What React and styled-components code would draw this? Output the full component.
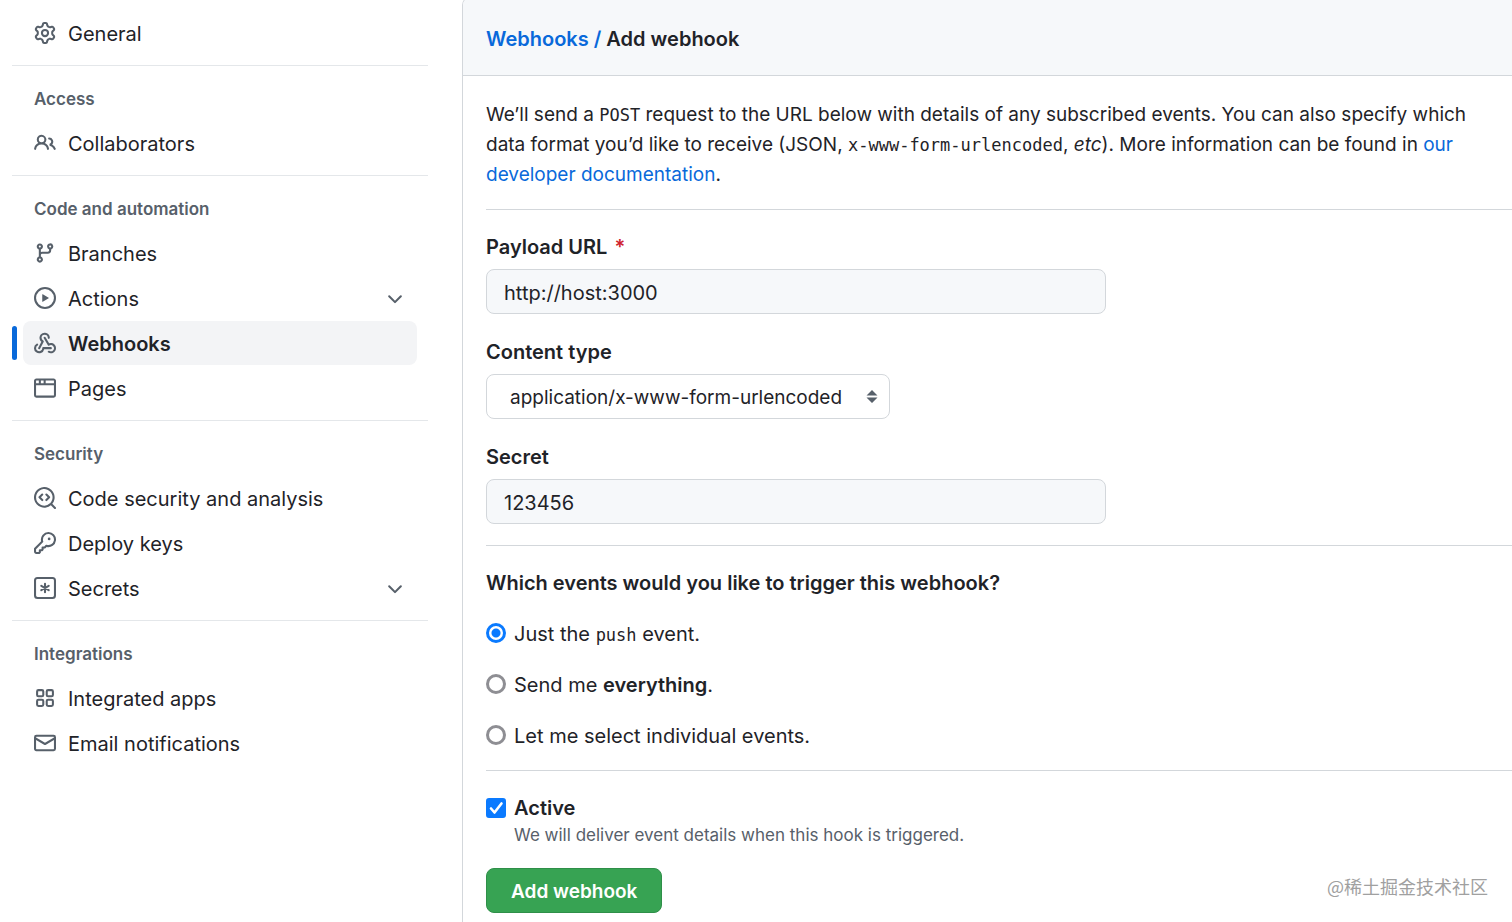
import React from 'react';
import styled, { createGlobalStyle, css, ThemeProvider } from 'styled-components';

const theme = {
  colors: {
    text: '#1f2328',
    muted: '#57606a',
    link: '#0969da',
    border: '#d3d7db',
    divider: '#e4e7ea',
    subtle: '#f6f8fa',
    hover: '#f3f4f6',
    control: '#0a7aff',
    danger: '#cf222e',
    success: '#37a353',
  },
  fonts: {
    body: 'Inter, "Noto Sans", "Noto Sans CJK SC", sans-serif',
    mono: '"DejaVu Sans Mono", "Liberation Mono", monospace',
  },
};

const GlobalStyle = createGlobalStyle`
  * {
    box-sizing: border-box;
  }

  body {
    margin: 0;
    background: #fff;
    color: ${theme.colors.text};
    font-family: ${theme.fonts.body};
    font-size: 20px;
    line-height: 30px;
  }
`;

// icons
const Svg = styled.svg`
  width: 22px;
  height: 22px;
  flex: none;
  fill: ${({ theme }) => theme.colors.muted};
`;

const Icon = ({ d, children }) => (
  <Svg viewBox="0 0 16 16" aria-hidden="true">
    {d && <path fillRule="evenodd" d={d} />}
    {children}
  </Svg>
);

const paths = {
  gear: 'M7.429 1.525a6.593 6.593 0 011.142 0c.036.003.108.036.137.146l.289 1.105c.147.56.55.967.997 1.189.174.086.341.183.501.29.417.278.97.423 1.53.27l1.102-.303c.11-.03.175.016.195.046.219.31.41.641.573.989.014.031.022.11-.059.19l-.815.806c-.411.406-.562.957-.53 1.456a4.588 4.588 0 010 .582c-.032.499.119 1.05.53 1.456l.815.806c.08.08.073.159.059.19a6.494 6.494 0 01-.573.99c-.02.029-.086.074-.195.045l-1.103-.303c-.559-.153-1.112-.008-1.529.27-.16.107-.327.204-.5.29-.449.222-.851.628-.998 1.189l-.289 1.105c-.029.11-.101.143-.137.146a6.613 6.613 0 01-1.142 0c-.036-.003-.108-.037-.137-.146l-.289-1.105c-.147-.56-.55-.967-.997-1.189a4.502 4.502 0 01-.501-.29c-.417-.278-.97-.423-1.53-.27l-1.102.303c-.11.03-.175-.016-.195-.046a6.492 6.492 0 01-.573-.989c-.014-.031-.022-.11.059-.19l.815-.806c.411-.406.562-.957.53-1.456a4.587 4.587 0 010-.582c.032-.499-.119-1.05-.53-1.456l-.815-.806c-.08-.08-.073-.159-.059-.19a6.44 6.44 0 01.573-.99c.02-.029.086-.075.195-.045l1.103.303c.559.153 1.112.008 1.529-.27.16-.107.327-.204.5-.29.449-.222.851-.628.998-1.189l.289-1.105c.029-.11.101-.143.137-.146zM8 0c-.236 0-.47.01-.701.03-.743.065-1.29.615-1.458 1.261l-.29 1.106c-.017.066-.078.158-.211.224a5.994 5.994 0 00-.668.386c-.123.082-.233.09-.3.071L3.27 2.776c-.644-.177-1.392.02-1.82.63a7.977 7.977 0 00-.704 1.217c-.315.675-.111 1.422.363 1.891l.815.806c.05.048.098.147.088.294a6.084 6.084 0 000 .772c.01.147-.038.246-.088.294l-.815.806c-.474.469-.678 1.216-.363 1.891.2.428.436.835.704 1.218.428.609 1.176.806 1.82.63l1.103-.303c.066-.019.176-.011.299.071.213.143.436.272.668.386.133.066.194.158.212.224l.289 1.106c.169.646.715 1.196 1.458 1.26a8.094 8.094 0 001.402 0c.743-.064 1.29-.614 1.458-1.26l.29-1.106c.017-.066.078-.158.211-.224a5.98 5.98 0 00.668-.386c.123-.082.233-.09.3-.071l1.102.302c.644.177 1.392-.02 1.82-.63.268-.382.505-.789.704-1.217.315-.675.111-1.422-.364-1.891l-.814-.806c-.05-.048-.098-.147-.088-.294a6.1 6.1 0 000-.772c-.01-.147.039-.246.088-.294l.814-.806c.475-.469.679-1.216.364-1.891a7.992 7.992 0 00-.704-1.218c-.428-.609-1.176-.806-1.82-.63l-1.103.303c-.066.019-.176.011-.299-.071a5.991 5.991 0 00-.668-.386c-.133-.066-.194-.158-.212-.224L10.16 1.29C9.99.645 9.444.095 8.701.031A8.094 8.094 0 008 0zm1.5 8a1.5 1.5 0 11-3 0 1.5 1.5 0 013 0zM11 8a3 3 0 11-6 0 3 3 0 016 0z',
  people: 'M5.5 3.5a2 2 0 100 4 2 2 0 000-4zM2 5.5a3.5 3.5 0 115.898 2.549 5.507 5.507 0 013.034 4.084.75.75 0 11-1.482.235 4.001 4.001 0 00-7.9 0 .75.75 0 01-1.482-.236A5.507 5.507 0 013.102 8.05 3.49 3.49 0 012 5.5zM11 4a.75.75 0 100 1.5 1.5 1.5 0 01.666 2.844.75.75 0 00-.416.672v.352a.75.75 0 00.574.73c1.2.289 2.162 1.2 2.522 2.372a.75.75 0 101.434-.44 5.01 5.01 0 00-2.56-3.012A3 3 0 0011 4z',
  branch: 'M11.75 2.5a.75.75 0 100 1.5.75.75 0 000-1.5zm-2.25.75a2.25 2.25 0 113 2.122V6A2.5 2.5 0 0110 8.5H6a1 1 0 00-1 1v1.128a2.251 2.251 0 11-1.5 0V5.372a2.25 2.25 0 111.5 0v1.836A2.492 2.492 0 016 7h4a1 1 0 001-1v-.628A2.25 2.25 0 019.5 3.25zM4.25 12a.75.75 0 100 1.5.75.75 0 000-1.5zM3.5 3.25a.75.75 0 111.5 0 .75.75 0 01-1.5 0z',
  play: 'M1.5 8a6.5 6.5 0 1113 0 6.5 6.5 0 01-13 0zM8 0a8 8 0 100 16A8 8 0 008 0zM6.379 5.227A.25.25 0 006 5.442v5.117a.25.25 0 00.379.214l4.264-2.559a.25.25 0 000-.428L6.379 5.227z',
  webhook: 'M5.5 4.25a2.25 2.25 0 014.5 0 .75.75 0 001.5 0 3.75 3.75 0 10-6.14 2.889l-2.272 4.258a.75.75 0 001.324.706L7 7.25a.75.75 0 00-.309-1.015A2.25 2.25 0 015.5 4.25zM7.364 3.607a.75.75 0 011.03.257l2.608 4.349a3.75 3.75 0 11-.628 6.785.75.75 0 01.752-1.299 2.25 2.25 0 10-.033-3.88.75.75 0 01-1.03-.256L7.107 4.636a.75.75 0 01.257-1.03zM2.9 8.776A.75.75 0 012.625 9.8 2.25 2.25 0 106 11.75a.75.75 0 01.75-.751h5.5a.75.75 0 010 1.5H7.425a3.751 3.751 0 11-5.55-3.998.75.75 0 011.024.274z',
  browser: 'M0 2.75C0 1.784.784 1 1.75 1h12.5c.966 0 1.75.784 1.75 1.75v10.5A1.75 1.75 0 0114.25 15H1.75A1.75 1.75 0 010 13.25V2.75zm1.75-.25a.25.25 0 00-.25.25V4.5h2v-2H1.75zM5 2.5v2h2v-2H5zm3.5 0v2h6V2.75a.25.25 0 00-.25-.25H8.5zm6 3.5h-13v7.25c0 .138.112.25.25.25h12.5a.25.25 0 00.25-.25V6z',
  codescan: 'M8.47 4.97a.75.75 0 000 1.06L9.94 7.5 8.47 8.97a.75.75 0 101.06 1.06l2-2a.75.75 0 000-1.06l-2-2a.75.75 0 00-1.06 0zM6.53 6.03a.75.75 0 00-1.06-1.06l-2 2a.75.75 0 000 1.06l2 2a.75.75 0 101.06-1.06L5.06 7.5l1.47-1.47zM12.246 13.307a7.5 7.5 0 111.06-1.06l2.474 2.473a.75.75 0 11-1.06 1.06l-2.474-2.473zM1.5 7.5a6 6 0 1110.386 4.094.75.75 0 00-.292.293A6 6 0 011.5 7.5z',
  key: 'M6.5 5.5a4 4 0 112.731 3.795.75.75 0 00-.768.18L7.44 10.5H6.25a.75.75 0 00-.75.75v1.19l-.06.06H4.25a.75.75 0 00-.75.75v1.19l-.06.06H1.75a.25.25 0 01-.25-.25v-1.69l5.024-5.023a.75.75 0 00.181-.768A3.995 3.995 0 016.5 5.5zm4-5.5a5.5 5.5 0 00-5.348 6.788L.22 11.72a.75.75 0 00-.22.53v2C0 15.216.784 16 1.75 16h2a.75.75 0 00.53-.22l.5-.5a.75.75 0 00.22-.53V14h.75a.75.75 0 00.53-.22l.5-.5a.75.75 0 00.22-.53V12h.75a.75.75 0 00.53-.22l.932-.932A5.5 5.5 0 1010.5 0zm.5 6a1 1 0 100-2 1 1 0 000 2z',
  mail: 'M1.75 2A1.75 1.75 0 000 3.75v.736a.75.75 0 000 .027v7.737C0 13.216.784 14 1.75 14h12.5A1.75 1.75 0 0016 12.25v-8.5A1.75 1.75 0 0014.25 2H1.75zM14.5 4.07v-.32a.25.25 0 00-.25-.25H1.75a.25.25 0 00-.25.25v.32L8 7.88l6.5-3.81zm-13 1.74v6.441c0 .138.112.25.25.25h12.5a.25.25 0 00.25-.25V5.809L8.38 9.397a.75.75 0 01-.76 0L1.5 5.809z',
  chevron: 'M12.78 6.22a.75.75 0 010 1.06l-4.25 4.25a.75.75 0 01-1.06 0L3.22 7.28a.75.75 0 011.06-1.06L8 9.94l3.72-3.72a.75.75 0 011.06 0z',
};

const AppsIcon = () => (
  <Icon>
    <g fill="none" stroke={theme.colors.muted} strokeWidth="1.5">
      <rect x="2.25" y="2.25" width="4.5" height="4.5" rx="1" />
      <rect x="9.25" y="2.25" width="4.5" height="4.5" rx="1" />
      <rect x="2.25" y="9.25" width="4.5" height="4.5" rx="1" />
      <rect x="9.25" y="9.25" width="4.5" height="4.5" rx="1" />
    </g>
  </Icon>
);

const SecretsIcon = () => (
  <Icon>
    <g fill="none" stroke={theme.colors.muted} strokeWidth="1.5" strokeLinecap="round">
      <rect x=".75" y=".75" width="14.5" height="14.5" rx="1.8" />
      <path d="M8 4.9v6.2M5.3 6.45l5.4 3.1M10.7 6.45L5.3 9.55" />
    </g>
  </Icon>
);

// layout
const Page = styled.div`
  display: flex;
  gap: 34px;
  min-height: 100vh;
  padding-left: 12px;
`;

const Sidebar = styled.nav`
  flex: 0 0 416px;
`;

const NavGroup = styled.section`
  padding: 10px 11px;

  & + & {
    border-top: 1px solid ${({ theme }) => theme.colors.divider};
  }

  &:first-child {
    padding-top: 11px;
  }
`;

const NavHeading = styled.h2`
  margin: 0;
  padding: 2px 11px 0;
  color: ${({ theme }) => theme.colors.muted};
  font-size: 17px;
  font-weight: 600;
  line-height: 43px;
`;

const NavList = styled.ul`
  display: flex;
  flex-direction: column;
  gap: 1px;
  margin: 0;
  padding: 0;
  list-style: none;
`;

const NavLink = styled.a`
  position: relative;
  display: flex;
  align-items: center;
  gap: 12px;
  height: 44px;
  padding: 0 11px;
  border-radius: 8px;
  color: ${({ theme }) => theme.colors.text};
  text-decoration: none;

  ${({ $active, theme }) => $active && css`
    background: ${theme.colors.hover};
    font-weight: 600;

    &::before {
      content: '';
      position: absolute;
      top: 5px;
      bottom: 5px;
      left: -11px;
      width: 5px;
      border-radius: 4px;
      background: ${theme.colors.link};
    }
  `}
`;

const NavText = styled.span`
  flex: 1;
  padding-top: 2px;
`;

const Panel = styled.main`
  flex: 1;
  min-width: 0;
  margin-top: -3px;
  border: 1px solid ${({ theme }) => theme.colors.border};
  border-width: 1px 0 0 1px;
  border-radius: 8px 0 0 0;
  overflow: hidden;
`;

const PanelHeader = styled.header`
  padding: 26px 23px 21px;
  border-bottom: 1px solid ${({ theme }) => theme.colors.border};
  background: ${({ theme }) => theme.colors.subtle};
`;

const Title = styled.h1`
  margin: 0;
  font-size: 20px;
  font-weight: 600;
`;

const Link = styled.a`
  color: ${({ theme }) => theme.colors.link};
  text-decoration: none;
`;

const Form = styled.form`
  padding: 24px 0 8px 23px;
`;

const Description = styled.p`
  margin: 0;
  padding-right: 12px;
  font-size: 19px;
`;

const Code = styled.code`
  font-family: ${({ theme }) => theme.fonts.mono};
  font-size: 17px;
  line-height: 20px;
`;

const Rule = styled.hr`
  margin: 19px 0 22px;
  border: 0;
  border-top: 1px solid ${({ theme }) => theme.colors.border};
`;

const Fields = styled.div`
  display: flex;
  flex-direction: column;
  gap: 23px;
  padding-bottom: 2px;
`;

const Field = styled.div`
  display: flex;
  flex-direction: column;
  align-items: flex-start;
  gap: 7px;
`;

const Label = styled.label`
  font-weight: 600;
`;

const Required = styled.span`
  margin-left: 2px;
  color: ${({ theme }) => theme.colors.danger};
`;

const control = css`
  height: 45px;
  border: 1px solid ${({ theme }) => theme.colors.border};
  border-radius: 8px;
  color: inherit;
  font: inherit;
`;

const TextInput = styled.input`
  ${control}
  width: 100%;
  max-width: 620px;
  padding: 2px 17px 0;
  background: ${({ theme }) => theme.colors.subtle};
`;

const SelectBox = styled.div`
  position: relative;
`;

const Select = styled.select`
  ${control}
  appearance: none;
  padding: 2px 46px 0 23px;
  background: #fff;
  font-size: 19px;
`;

const SelectArrows = styled.svg`
  position: absolute;
  top: 15px;
  right: 12px;
  width: 12px;
  height: 15px;
  fill: ${({ theme }) => theme.colors.muted};
  pointer-events: none;
`;

const Events = styled.fieldset`
  display: flex;
  flex-direction: column;
  gap: 21px;
  margin: 0;
  padding: 0;
  border: 0;
`;

const Legend = styled.legend`
  margin-bottom: 21px;
  padding: 0;
  font-weight: 600;
`;

const Choice = styled.label`
  display: flex;
  align-items: center;
  gap: 8px;
  font-weight: ${({ $bold }) => ($bold ? 600 : 400)};
`;

const Radio = styled.input`
  flex: none;
  width: 20px;
  height: 20px;
  margin: 0 0 2px;
  appearance: none;
  border: 3px solid #8e8e93;
  border-radius: 50%;
  background: #fff;

  &:checked {
    border-color: ${({ theme }) => theme.colors.control};
    background: radial-gradient(circle, ${({ theme }) => theme.colors.control} 4px, #fff 5px);
  }
`;

const CheckWrap = styled.span`
  display: grid;
  width: 20px;
  height: 20px;

  > * {
    grid-area: 1 / 1;
  }
`;

const Checkbox = styled.input`
  width: 20px;
  height: 20px;
  margin: 0;
  appearance: none;
  border: 2px solid #8e8e93;
  border-radius: 3px;

  &:checked {
    border-color: ${({ theme }) => theme.colors.control};
    background: ${({ theme }) => theme.colors.control};
  }
`;

const CheckMark = styled.svg`
  width: 20px;
  height: 20px;
  fill: none;
  stroke: #fff;
  stroke-width: 2.6;
  stroke-linecap: round;
  stroke-linejoin: round;
  pointer-events: none;
`;

const Note = styled.p`
  margin: 0 0 20px 28px;
  color: ${({ theme }) => theme.colors.muted};
  font-size: 17px;
  line-height: 25px;
`;

const SubmitButton = styled.button`
  height: 45px;
  padding: 2px 24px 0;
  border: 1px solid #2f8f49;
  border-radius: 8px;
  background: ${({ theme }) => theme.colors.success};
  color: #fff;
  font: inherit;
  font-size: 19px;
  font-weight: 600;
`;

const Watermark = styled.div`
  position: absolute;
  right: 24px;
  bottom: 21px;
  color: #a0a0a0;
  font-family: "Noto Sans CJK SC", sans-serif;
  font-size: 18px;
`;

const NavItem = ({ icon, label, active, expandable }) => (
  <li>
    <NavLink href="#" $active={active} aria-current={active ? 'page' : undefined}>
      {typeof icon === 'string' ? <Icon d={paths[icon]} /> : icon}
      <NavText>{label}</NavText>
      {expandable && <Icon d={paths.chevron} />}
    </NavLink>
  </li>
);

const groups = [
  { items: [{ icon: 'gear', label: 'General' }] },
  { title: 'Access', items: [{ icon: 'people', label: 'Collaborators' }] },
  {
    title: 'Code and automation',
    items: [
      { icon: 'branch', label: 'Branches' },
      { icon: 'play', label: 'Actions', expandable: true },
      { icon: 'webhook', label: 'Webhooks', active: true },
      { icon: 'browser', label: 'Pages' },
    ],
  },
  {
    title: 'Security',
    items: [
      { icon: 'codescan', label: 'Code security and analysis' },
      { icon: 'key', label: 'Deploy keys' },
      { icon: <SecretsIcon />, label: 'Secrets', expandable: true },
    ],
  },
  {
    title: 'Integrations',
    items: [
      { icon: <AppsIcon />, label: 'Integrated apps' },
      { icon: 'mail', label: 'Email notifications' },
    ],
  },
];

const App = () => (
  <ThemeProvider theme={theme}>
    <GlobalStyle />
    <Page>
      <Sidebar aria-label="Settings">
        {groups.map(({ title, items }) => (
          <NavGroup key={title || 'general'}>
            {title && <NavHeading>{title}</NavHeading>}
            <NavList>
              {items.map((item) => (
                <NavItem key={item.label} {...item} />
              ))}
            </NavList>
          </NavGroup>
        ))}
      </Sidebar>
      <Panel>
        <PanelHeader>
          <Title>
            <Link href="#">Webhooks /</Link> Add webhook
          </Title>
        </PanelHeader>
        <Form onSubmit={(e) => e.preventDefault()}>
          <Description>
            We’ll send a <Code>POST</Code> request to the URL below with details of any subscribed
            events. You can also specify which data format you’d like to receive (JSON,{' '}
            <Code>x-www-form-urlencoded</Code>, <em>etc</em>). More information can be found in{' '}
            <Link href="#">our developer documentation</Link>.
          </Description>
          <Rule />
          <Fields>
            <Field>
              <Label htmlFor="payload-url">
                Payload URL <Required>*</Required>
              </Label>
              <TextInput id="payload-url" type="text" defaultValue="http://host:3000" />
            </Field>
            <Field>
              <Label htmlFor="content-type">Content type</Label>
              <SelectBox>
                <Select id="content-type" defaultValue="form">
                  <option value="form">application/x-www-form-urlencoded</option>
                  <option value="json">application/json</option>
                </Select>
                <SelectArrows viewBox="0 0 12 15" aria-hidden="true">
                  <path d="M6 1l5.5 5.5H.5zM6 14L.5 8.5h11z" />
                </SelectArrows>
              </SelectBox>
            </Field>
            <Field>
              <Label htmlFor="secret">Secret</Label>
              <TextInput id="secret" type="text" defaultValue="123456" />
            </Field>
          </Fields>
          <Rule />
          <Events>
            <Legend>Which events would you like to trigger this webhook?</Legend>
            <Choice>
              <Radio type="radio" name="events" defaultChecked />
              <span>Just the <Code>push</Code> event.</span>
            </Choice>
            <Choice>
              <Radio type="radio" name="events" />
              <span>Send me <Label as="strong">everything</Label>.</span>
            </Choice>
            <Choice>
              <Radio type="radio" name="events" />
              <span>Let me select individual events.</span>
            </Choice>
          </Events>
          <Rule />
          <Choice $bold>
            <CheckWrap>
              <Checkbox type="checkbox" defaultChecked aria-describedby="active-note" />
              <CheckMark viewBox="0 0 20 20" aria-hidden="true">
                <path d="M5 10.5l3.5 4L15.5 5.5" />
              </CheckMark>
            </CheckWrap>
            Active
          </Choice>
          <Note id="active-note">We will deliver event details when this hook is triggered.</Note>
          <SubmitButton type="submit">Add webhook</SubmitButton>
        </Form>
      </Panel>
    </Page>
    <Watermark>@稀土掘金技术社区</Watermark>
  </ThemeProvider>
);

export default App;
